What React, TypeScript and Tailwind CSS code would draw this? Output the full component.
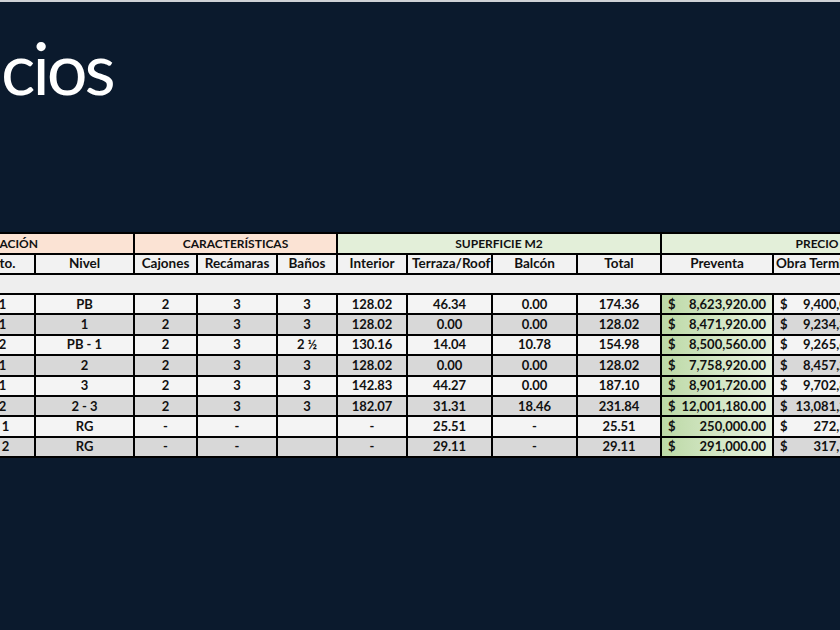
import React from 'react';

interface Row {
  dpto: string;
  nivel: string;
  cajones: string;
  recamaras: string;
  banos: string;
  interior: string;
  terraza: string;
  balcon: string;
  total: string;
  preventa: string;
  obra: string;
}

const rows: Row[] = [
  { dpto: '101', nivel: 'PB', cajones: '2', recamaras: '3', banos: '3', interior: '128.02', terraza: '46.34', balcon: '0.00', total: '174.36', preventa: '8,623,920.00', obra: '9,400,072.80' },
  { dpto: '201', nivel: '1', cajones: '2', recamaras: '3', banos: '3', interior: '128.02', terraza: '0.00', balcon: '0.00', total: '128.02', preventa: '8,471,920.00', obra: '9,234,392.80' },
  { dpto: '102', nivel: 'PB - 1', cajones: '2', recamaras: '3', banos: '2 ½', interior: '130.16', terraza: '14.04', balcon: '10.78', total: '154.98', preventa: '8,500,560.00', obra: '9,265,610.40' },
  { dpto: '301', nivel: '2', cajones: '2', recamaras: '3', banos: '3', interior: '128.02', terraza: '0.00', balcon: '0.00', total: '128.02', preventa: '7,758,920.00', obra: '8,457,222.80' },
  { dpto: '401', nivel: '3', cajones: '2', recamaras: '3', banos: '3', interior: '142.83', terraza: '44.27', balcon: '0.00', total: '187.10', preventa: '8,901,720.00', obra: '9,702,874.80' },
  { dpto: '402', nivel: '2 - 3', cajones: '2', recamaras: '3', banos: '3', interior: '182.07', terraza: '31.31', balcon: '18.46', total: '231.84', preventa: '12,001,180.00', obra: '13,081,286.20' },
  { dpto: 'RG 1', nivel: 'RG', cajones: '-', recamaras: '-', banos: '', interior: '-', terraza: '25.51', balcon: '-', total: '25.51', preventa: '250,000.00', obra: '272,500.00' },
  { dpto: 'RG 2', nivel: 'RG', cajones: '-', recamaras: '-', banos: '', interior: '-', terraza: '29.11', balcon: '-', total: '29.11', preventa: '291,000.00', obra: '317,190.00' },
];

// column widths, the first two sit mostly off the left edge
const widths = [80, 80, 99, 63, 80, 60, 70, 85, 85, 84, 112, 114, 86];

function Money({ value }: { value: string }) {
  return (
    <div className="flex justify-between pl-[6px] pr-[6px]">
      <span>$</span>
      <span>{value}</span>
    </div>
  );
}

export default function App() {
  const cell = 'border-2 border-black text-center px-1';
  return (
    <div className="w-[840px] h-[630px] overflow-hidden bg-[#0b1a2d] font-['Lato',sans-serif]">
      <div className="h-[2px] bg-[#cfd2d6]" />
      <h1 className="pt-[29px] ml-[1px] text-[72px] leading-none font-normal text-white tracking-[-3px]">
        cios
      </h1>

      <table
        className="mt-[129px] -ml-[126px] table-fixed border-collapse text-[13px] font-bold text-[#111] leading-none"
        style={{ width: widths.reduce((a, b) => a + b, 0) }}
      >
        <colgroup>
          {widths.map((w, i) => (
            <col key={i} style={{ width: w }} />
          ))}
        </colgroup>
        <thead>
          <tr className="h-[21px] text-[12px]">
            <th colSpan={3} className={`${cell} bg-[#fbe3d4]`}>UBICACIÓN</th>
            <th colSpan={3} className={`${cell} bg-[#fbe3d4]`}>CARACTERÍSTICAS</th>
            <th colSpan={4} className={`${cell} bg-[#e3efd9]`}>SUPERFICIE M2</th>
            <th colSpan={3} className={`${cell} bg-[#e3efd9]`}>PRECIO</th>
          </tr>
          <tr className="h-[20px] bg-[#f2f2f2] text-[13.5px]">
            <th className={cell}>Torre</th>
            <th className={cell}>Depto.</th>
            <th className={cell}>Nivel</th>
            <th className={cell}>Cajones</th>
            <th className={cell}>Recámaras</th>
            <th className={cell}>Baños</th>
            <th className={cell}>Interior</th>
            <th className={`${cell} px-0`}>Terraza/Roof</th>
            <th className={cell}>Balcón</th>
            <th className={cell}>Total</th>
            <th className={cell}>Preventa</th>
            <th className={`${cell} text-left pl-[2px]`}>Obra Terminada</th>
            <th className={cell}>Escrituración</th>
          </tr>
        </thead>
        <tbody>
          <tr className="h-[20px] bg-[#eeeeee]">
            <td colSpan={13} className="border-y-2 border-black" />
          </tr>
          {rows.map((r, i) => {
            const shade = i % 2 === 0 ? 'bg-[#f4f4f4]' : 'bg-[#d8d8d8]';
            return (
              <tr key={i} className={`h-[20.4px] ${shade}`}>
                <td className={cell}>A</td>
                <td className={cell}>{r.dpto}</td>
                <td className={cell}>{r.nivel}</td>
                <td className={cell}>{r.cajones}</td>
                <td className={cell}>{r.recamaras}</td>
                <td className={cell}>{r.banos}</td>
                <td className={cell}>{r.interior}</td>
                <td className={cell}>{r.terraza}</td>
                <td className={cell}>{r.balcon}</td>
                <td className={cell}>{r.total}</td>
                <td className="border-2 border-black bg-gradient-to-r from-[#bcd9a6] via-[#d3e6c4] to-[#e6f1de]">
                  <Money value={r.preventa} />
                </td>
                <td className="border-2 border-black">
                  <Money value={r.obra} />
                </td>
                <td className="border-2 border-black" />
              </tr>
            );
          })}
        </tbody>
      </table>
    </div>
  );
}
